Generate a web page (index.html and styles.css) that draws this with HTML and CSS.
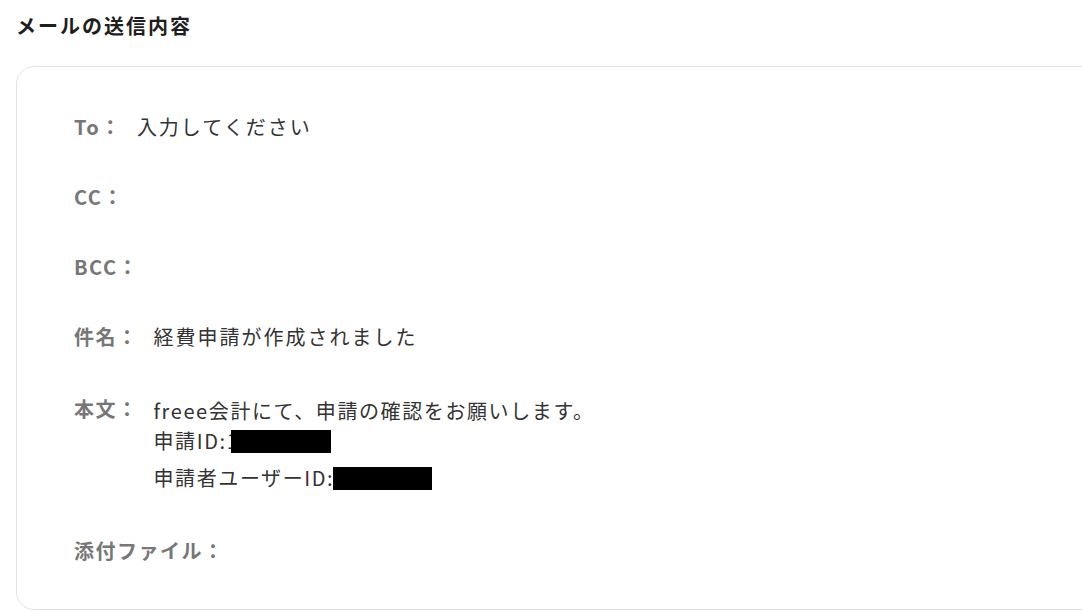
FILE: index.html
```html
<!DOCTYPE html>
<html lang="ja">
<head>
<meta charset="utf-8">
<title>メールの送信内容</title>
<link rel="stylesheet" href="styles.css">
</head>
<body>
<h2 class="title">メールの送信内容</h2>
<div class="card">
  <div class="row"><span class="label">To：</span><span class="value">入力してください</span></div>
  <div class="row"><span class="label">CC：</span><span class="value"></span></div>
  <div class="row"><span class="label">BCC：</span><span class="value"></span></div>
  <div class="row"><span class="label">件名：</span><span class="value">経費申請が作成されました</span></div>
  <div class="row row-body"><span class="label">本文：</span>
    <div class="value body-text">
      <div class="line">freee会計にて、申請の確認をお願いします。</div>
      <div class="line">申請ID:1<span class="redact redact-a"></span></div>
      <div class="line line-last">申請者ユーザーID:<span class="redact redact-b"></span></div>
    </div>
  </div>
  <div class="row row-last"><span class="label">添付ファイル：</span><span class="value"></span></div>
</div>
</body>
</html>
```
FILE: styles.css
```css
html, body {
  margin: 0;
  padding: 0;
  background: #ffffff;
  overflow: hidden;
}
body {
  font-family: "Noto Sans CJK JP", "Noto Sans", sans-serif;
  color: #222;
  padding: 11px 0 0 16px;
}
.title {
  margin: 0;
  font-size: 20px;
  line-height: 30px;
  height: 30px;
  font-weight: 700;
  letter-spacing: 2px;
  color: #1e1e1e;
}
.card {
  margin-top: 25px;
  width: 1100px;
  border: 1px solid #e3e3e3;
  border-radius: 18px;
  padding: 45px 0 43px 57px;
  box-sizing: border-box;
}
.row {
  display: flex;
  align-items: flex-start;
  height: 30px;
  line-height: 30px;
  font-size: 20px;
  letter-spacing: 2px;
  margin-bottom: 40px;
}
.row-body {
  height: 97px;
  padding-top: 4px;
  margin-bottom: 43px;
}
.row-last {
  margin-bottom: 0;
}
.label {
  font-weight: 700;
  color: #777;
  font-size: 20px;
  letter-spacing: 1.5px;
  margin-right: 15px;
  height: 30px;
}
.row-body .label {
  margin-top: -2px;
}
.value {
  color: #333;
}
.body-text {
  letter-spacing: 1.6px;
}
.line {
  height: 30px;
  display: flex;
  align-items: center;
}
.line-last {
  margin-top: 7px;
}
.redact {
  display: inline-block;
  background: #000;
  height: 23px;
}
.redact-a {
  width: 100px;
  margin-left: -8px;
}
.redact-b {
  width: 99px;
  margin-left: -1px;
}
```
